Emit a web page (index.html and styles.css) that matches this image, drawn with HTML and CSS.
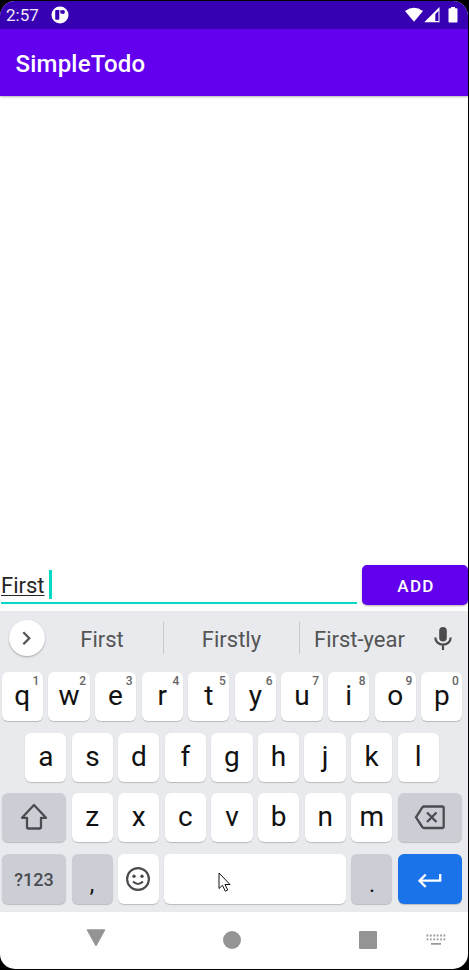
FILE: index.html
```
<!DOCTYPE html>
<html lang="en">
<head>
<meta charset="utf-8">
<title>SimpleTodo</title>
<link rel="stylesheet" href="styles.css">
</head>
<body>
<div class="screen">
  <header class="status">
    <span class="clock">2:57</span>
    <svg class="notif" width="18" height="18" viewBox="0 0 18 18"><circle cx="9" cy="9" r="8.500" fill="#fff"/><path d="M4.200 5q0-1 1-1H8.300V12.800q0 1-1 1H5.200q-1 0-1-1z" fill="#3700b3"/><path d="M9.300 4.200h1.400v3.600q-1.400 0-1.400-1.400z" fill="#3700b3"/><circle cx="12" cy="6" r="1.900" fill="#3700b3"/></svg>
    <svg class="signals" width="54" height="18" viewBox="0 0 54 18"><path d="M0 5Q9-1.600 18 5L9 15.800z" fill="#fff"/><path fill-rule="evenodd" d="M34.500 1V16.300H19.200zM33.500 5L30.300 8V15H33.500z" fill="#fff"/><path d="M46 1h4v1.300h1.500q1 0 1 1V15.500q0 1-1 1h-7q-1 0-1-1V3.300q0-1 1-1H46z" fill="#fff"/></svg>
  </header>
  <div class="appbar">SimpleTodo</div>
  <main class="list"></main>
  <div class="entry">
    <div class="field"><span class="typed">First</span><span class="caret"></span></div>
    <button class="add">ADD</button>
  </div>
  <section class="keyboard">
    <div class="suggest">
      <span class="expand"><svg width="36" height="36" viewBox="0 0 36 36"><path d="M14.300 12.300l6 6-6 6" fill="none" stroke="#555" stroke-width="2.300"/></svg></span>
      <span class="word">First</span><span class="word">Firstly</span><span class="word">First-year</span>
      <svg class="mic" width="20" height="26" viewBox="0 0 20 26"><rect x="6.200" y="1" width="7.600" height="14.500" rx="3.800" fill="#4c4c4c"/><path d="M2.300 11.500a7.700 7.200 0 0 0 15.400 0M10 18.800V24" fill="none" stroke="#4c4c4c" stroke-width="2.200"/></svg>
    </div>
    <div class="row">
      <span class="key">q<sup>1</sup></span><span class="key">w<sup>2</sup></span><span class="key">e<sup>3</sup></span><span class="key">r<sup>4</sup></span><span class="key">t<sup>5</sup></span><span class="key">y<sup>6</sup></span><span class="key">u<sup>7</sup></span><span class="key">i<sup>8</sup></span><span class="key">o<sup>9</sup></span><span class="key">p<sup>0</sup></span>
    </div>
    <div class="row inset">
      <span class="key">a</span><span class="key">s</span><span class="key">d</span><span class="key">f</span><span class="key">g</span><span class="key">h</span><span class="key">j</span><span class="key">k</span><span class="key">l</span>
    </div>
    <div class="row">
      <span class="key wide dim"><svg width="30" height="28" viewBox="0 0 30 28"><path d="M15 2L27 14.800H22V24.500q0 1-1 1H9q-1 0-1-1V14.800H3z" fill="none" stroke="#4b4c50" stroke-width="2.300" stroke-linejoin="round"/></svg></span>
      <span class="key">z</span><span class="key">x</span><span class="key">c</span><span class="key">v</span><span class="key">b</span><span class="key">n</span><span class="key">m</span>
      <span class="key wide dim"><svg width="32" height="26" viewBox="0 0 32 26"><path d="M10 2.500H28q1.700 0 1.700 1.700V22.300q0 1.700-1.700 1.700H10q-1 0-1.700-1L2 13.300 8.300 3.500q.7-1 1.700-1zM13 8.500l9.500 9.500M22.500 8.500L13 18" fill="none" stroke="#4b4c50" stroke-width="2.300"/></svg></span>
    </div>
    <div class="row last">
      <span class="key wide dim symbols">?123</span>
      <span class="key dim punct">,</span>
      <span class="key"><svg class="smile" width="26" height="26" viewBox="0 0 26 26"><circle cx="13" cy="13" r="10.900" fill="none" stroke="#4b4c50" stroke-width="2.200"/><circle cx="9" cy="10.300" r="1.700" fill="#4b4c50"/><circle cx="17" cy="10.300" r="1.700" fill="#4b4c50"/><path d="M8 15.500q5 5 10 0" fill="none" stroke="#4b4c50" stroke-width="1.900"/></svg></span>
      <span class="key space"><svg class="pointer" width="14" height="21" viewBox="0 0 14 21"><path d="M1 1V16.500L4.500 13.300 7.300 19.200 9.700 18 7 12.500H12z" fill="#fff" stroke="#111" stroke-width="1"/></svg></span>
      <span class="key dim punct">.</span>
      <span class="key wide enter"><svg width="26" height="18" viewBox="0 0 26 18"><path d="M23.200 3V9.700H3M8.700 3.500L2.500 9.700 8.700 15.900" fill="none" stroke="#fff" stroke-width="2.300"/></svg></span>
    </div>
  </section>
  <nav class="nav">
    <svg class="back" width="20" height="18" viewBox="0 0 20 18"><path d="M1.500 1H18.500L10 16.300z" fill="#949494" stroke="#949494" stroke-width="1.500" stroke-linejoin="round"/></svg>
    <span class="home"></span>
    <span class="recent"></span>
    <svg class="ime" width="20" height="12" viewBox="0 0 20 12"><path d="M.5 1.500H20M.5 5.300H20" stroke="#999" stroke-width="1.800" stroke-dasharray="1.800 1.600"/><path d="M5 9.800H15" stroke="#999" stroke-width="1.800"/></svg>
  </nav>
</div>
</body>
</html>
```
FILE: styles.css
```
* { box-sizing: border-box; }
body { margin: 0; background: #000; font-family: Roboto, "Liberation Sans", sans-serif; }
svg { display: block; flex: none; }
.screen { width: 468px; height: 968px; margin: 1px 1px 1px 0; border-radius: 15px; overflow: hidden; background: #fefefe; display: flex; flex-direction: column; }
.status { height: 28px; flex: none; background: #3700b3; color: #eee8fa; display: flex; align-items: center; padding: 0 9px 0 6px; }
.clock { font-size: 17px; line-height: 28px; width: 45px; }
.signals { margin-left: auto; }
.appbar { height: 67px; flex: none; background: #6200ee; color: #fff; font-size: 24px; font-weight: 500; line-height: 71px; padding-left: 15.500px; box-shadow: 0 1px 2px rgba(0,0,0,.3); letter-spacing: .2px; }
.list { flex: 1; }
.entry { height: 47px; flex: none; display: flex; padding-left: 1px; gap: 5px; }
.field { width: 356px; height: 40px; border-bottom: 2px solid #03dac5; display: flex; align-items: flex-start; padding-top: 6px; gap: 4.500px; }
.typed { font-size: 22px; line-height: 30px; padding-top: 1px; color: #262626; text-decoration: underline; text-decoration-thickness: 1px; text-underline-offset: 2px; }
.caret { width: 3px; height: 29px; background: #03dac5; }
.add { width: 106px; height: 40px; margin: 1px 0 0; padding: 2px 0 0 2px; border: 0; border-radius: 5px; background: #6200ee; color: #fff; font: 500 17px Roboto, sans-serif; letter-spacing: 1.300px; box-shadow: 0 1px 2px rgba(0,0,0,.3); }
.keyboard { height: 301px; flex: none; background: #e8eaed; padding: 0 5.700px 0 1.700px; display: flex; flex-direction: column; gap: 11.600px; }
.suggest { height: 49.500px; flex: none; display: flex; align-items: center; padding: 5px 0 0 7.300px; }
.expand { width: 36px; height: 36px; border-radius: 50%; background: #fff; box-shadow: 0 1px 2px rgba(0,0,0,.3); margin-right: -4px; }
.word { flex: none; width: 122px; font-size: 22px; line-height: 28px; padding-top: 4px; color: #555; text-align: center; }
.word + .word { width: 136px; border-left: 1px solid #c6c8cb; }
.word + .word + .word { width: 120px; }
.mic { margin: 2px 0 0 14px; }
.row { height: 49px; flex: none; display: flex; gap: 5.400px; }
.inset { padding: 0 23.600px; }
.last { height: 50.500px; }
.key { position: relative; flex: 1 1 0; border-radius: 6px; background: #fff; box-shadow: 0 1px 1px rgba(0,0,0,.2); display: flex; align-items: center; justify-content: center; padding-bottom: 1px; font-size: 28px; line-height: 48px; color: #111; }
.key sup { position: absolute; top: 2px; right: 3.500px; font-size: 12px; font-weight: 500; line-height: 14px; color: #666; }
.wide { flex: 0 0 64.500px; }
.dim { background: #cbced5; }
.symbols { font-size: 18px; font-weight: 500; color: #4b4c50; padding-top: 2px; }
.punct { font-size: 23px; padding-top: 12px; }
.space { flex: 0 0 181.700px; }
.pointer { position: absolute; left: 54px; top: 18px; }
.enter { background: #1a73e8; padding-top: 2px; }
.nav { height: 57px; flex: none; display: flex; align-items: center; padding: 0 0 2px 86px; }
.back { margin-bottom: 3px; }
.home { width: 18px; height: 18px; border-radius: 50%; background: #949494; margin-left: 117px; }
.recent { width: 18px; height: 18px; border-radius: 1px; background: #949494; margin-left: 117.500px; }
.ime { margin-left: 49px; }
```
